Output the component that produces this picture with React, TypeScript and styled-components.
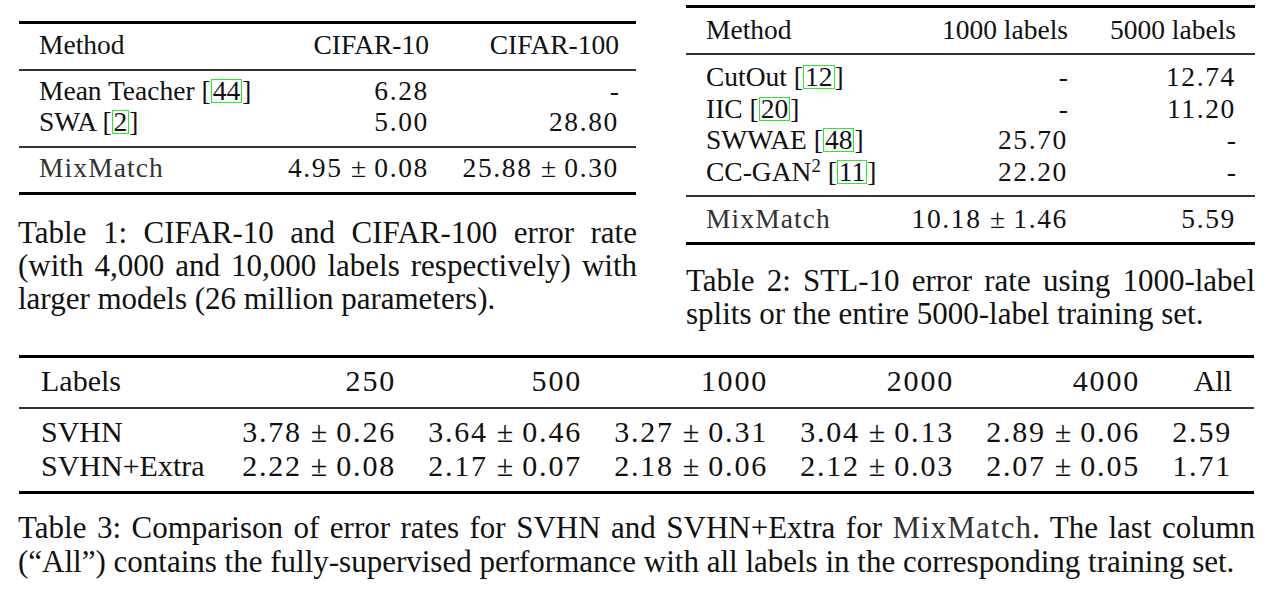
import React, { FC, ReactNode } from 'react';
import styled, { createGlobalStyle } from 'styled-components';

const SERIF = '"Liberation Serif", "Times New Roman", serif';

const GlobalStyle = createGlobalStyle`
    html,
    body {
        margin: 0;
        padding: 0;
        background: #fff;
    }

    body {
        font-family: ${SERIF};
        color: #111;
    }
`;

const Page = styled.div`
    width: 1280px;
    height: 590px;
    overflow: hidden;
    box-sizing: border-box;
    padding: 5px 25px 0 18px;
    font-family: ${SERIF};
`;

const TopRow = styled.div`
    display: flex;
    align-items: flex-start;
    gap: 49px;
`;

const Column = styled.div<{ $width: number; $top?: number }>`
    width: ${(p) => p.$width}px;
    padding-top: ${(p) => p.$top ?? 0}px;
`;

const Table = styled.div<{ $size: number; $inset?: number; $mt?: number }>`
    margin: ${(p) => p.$mt ?? 0}px ${(p) => p.$inset ?? 0}px 0 ${(p) => p.$inset ?? 0}px;
    border-top: 3px solid #000;
    border-bottom: 3px solid #000;
    font-family: ${SERIF};
    font-size: ${(p) => p.$size}px;
`;

const Section = styled.div<{ $cols: string; $lh: number; $pt: number; $pb: number; $pl: number }>`
    display: grid;
    grid-template-columns: ${(p) => p.$cols};
    line-height: ${(p) => p.$lh}px;
    padding: ${(p) => p.$pt}px 0 ${(p) => p.$pb}px ${(p) => p.$pl}px;

    & + & {
        border-top: 2px solid #333;
    }
`;

const Cell = styled.div<{ $right?: boolean }>`
    text-align: ${(p) => (p.$right ? 'right' : 'left')};
    white-space: nowrap;
`;

const Pm = styled.span`
    margin: 0 0.3em;
`;

const Num = styled.span`
    letter-spacing: 0.06em;
`;

const Cite = styled.span`
    display: inline-block;
    line-height: 22px;
    padding: 0 1px;
    border: 1px solid #22f022;
`;

const Sup = styled.sup`
    font-size: 0.68em;
    line-height: 0;
    vertical-align: 0.5em;
`;

const MixMatch = styled.span`
    color: #333;
    letter-spacing: 1.1px;
`;

const Caption = styled.div<{ $lh: number; $mt: number }>`
    margin-top: ${(p) => p.$mt}px;
    font-family: ${SERIF};
    font-size: 31px;
    line-height: ${(p) => p.$lh}px;
`;

const CaptionLine = styled.div<{ $justify?: boolean }>`
    text-align: ${(p) => (p.$justify ? 'justify' : 'left')};
    text-align-last: ${(p) => (p.$justify ? 'justify' : 'left')};
    white-space: nowrap;
`;

const pm = (a: string, b: string) => (
    <>
        <Num>{a}</Num>
        <Pm>±</Pm>
        <Num>{b}</Num>
    </>
);

const Ref: FC<{ children: ReactNode }> = ({ children }) => (
    <>
        [<Cite>{children}</Cite>]
    </>
);

const T1_COLS = '200px 190px 190px';
const T2_COLS = '160px 202px 168px';
const T3_COLS = '169px repeat(5, 186px) 92px';

const svhn = [
    ['3.78', '0.26'],
    ['3.64', '0.46'],
    ['3.27', '0.31'],
    ['3.04', '0.13'],
    ['2.89', '0.06'],
];
const svhnExtra = [
    ['2.22', '0.08'],
    ['2.17', '0.07'],
    ['2.18', '0.06'],
    ['2.12', '0.03'],
    ['2.07', '0.05'],
];

const CifarTable: FC = () => (
    <Table $size={27.5} $inset={1}>
        <Section $cols={T1_COLS} $lh={30.7} $pt={5.5} $pb={8.3} $pl={20}>
            <Cell>Method</Cell>
            <Cell $right>CIFAR-10</Cell>
            <Cell $right>CIFAR-100</Cell>
        </Section>
        <Section $cols={T1_COLS} $lh={30.7} $pt={5.5} $pb={8.3} $pl={20}>
            <Cell>
                Mean Teacher <Ref>44</Ref>
            </Cell>
            <Cell $right>
                <Num>6.28</Num>
            </Cell>
            <Cell $right>-</Cell>
            <Cell>
                SWA <Ref>2</Ref>
            </Cell>
            <Cell $right>
                <Num>5.00</Num>
            </Cell>
            <Cell $right>
                <Num>28.80</Num>
            </Cell>
        </Section>
        <Section $cols={T1_COLS} $lh={30.7} $pt={5.5} $pb={8.3} $pl={20}>
            <Cell>
                <MixMatch>MixMatch</MixMatch>
            </Cell>
            <Cell $right>{pm('4.95', '0.08')}</Cell>
            <Cell $right>{pm('25.88', '0.30')}</Cell>
        </Section>
    </Table>
);

const StlTable: FC = () => (
    <Table $size={27.5}>
        <Section $cols={T2_COLS} $lh={31.5} $pt={6} $pb={7.7} $pl={20}>
            <Cell>Method</Cell>
            <Cell $right>1000 labels</Cell>
            <Cell $right>5000 labels</Cell>
        </Section>
        <Section $cols={T2_COLS} $lh={31.5} $pt={6} $pb={7.7} $pl={20}>
            <Cell>
                CutOut <Ref>12</Ref>
            </Cell>
            <Cell $right>-</Cell>
            <Cell $right>
                <Num>12.74</Num>
            </Cell>
            <Cell>
                IIC <Ref>20</Ref>
            </Cell>
            <Cell $right>-</Cell>
            <Cell $right>
                <Num>11.20</Num>
            </Cell>
            <Cell>
                SWWAE <Ref>48</Ref>
            </Cell>
            <Cell $right>
                <Num>25.70</Num>
            </Cell>
            <Cell $right>-</Cell>
            <Cell>
                CC-GAN<Sup>2</Sup> <Ref>11</Ref>
            </Cell>
            <Cell $right>
                <Num>22.20</Num>
            </Cell>
            <Cell $right>-</Cell>
        </Section>
        <Section $cols={T2_COLS} $lh={31.5} $pt={6} $pb={7.7} $pl={20}>
            <Cell>
                <MixMatch>MixMatch</MixMatch>
            </Cell>
            <Cell $right>{pm('10.18', '1.46')}</Cell>
            <Cell $right>
                <Num>5.59</Num>
            </Cell>
        </Section>
    </Table>
);

const SvhnTable: FC = () => (
    <Table $size={30} $inset={1} $mt={24.9}>
        <Section $cols={T3_COLS} $lh={33.3} $pt={6.5} $pb={9} $pl={22}>
            <Cell>Labels</Cell>
            {['250', '500', '1000', '2000', '4000'].map((h) => (
                <Cell key={h} $right>
                    <Num>{h}</Num>
                </Cell>
            ))}
            <Cell $right>All</Cell>
        </Section>
        <Section $cols={T3_COLS} $lh={33.3} $pt={6.5} $pb={9} $pl={22}>
            <Cell>SVHN</Cell>
            {svhn.map(([a, b]) => (
                <Cell key={a + b} $right>
                    {pm(a, b)}
                </Cell>
            ))}
            <Cell $right>
                <Num>2.59</Num>
            </Cell>
            <Cell>SVHN+Extra</Cell>
            {svhnExtra.map(([a, b]) => (
                <Cell key={a + b} $right>
                    {pm(a, b)}
                </Cell>
            ))}
            <Cell $right>
                <Num>1.71</Num>
            </Cell>
        </Section>
    </Table>
);

const App: FC = () => (
    <Page>
        <GlobalStyle />
        <TopRow>
            <Column $width={619} $top={16}>
                <CifarTable />
                <Caption $lh={33.3} $mt={20.4}>
                    <CaptionLine $justify>Table 1: CIFAR-10 and CIFAR-100 error rate</CaptionLine>
                    <CaptionLine $justify>(with 4,000 and 10,000 labels respectively) with</CaptionLine>
                    <CaptionLine>larger models (26 million parameters).</CaptionLine>
                </Caption>
            </Column>
            <Column $width={569}>
                <StlTable />
                <Caption $lh={32.5} $mt={20}>
                    <CaptionLine $justify>Table 2: STL-10 error rate using 1000-label</CaptionLine>
                    <CaptionLine>splits or the entire 5000-label training set.</CaptionLine>
                </Caption>
            </Column>
        </TopRow>
        <SvhnTable />
        <Caption $lh={34} $mt={17}>
            <CaptionLine $justify>
                Table 3: Comparison of error rates for SVHN and SVHN+Extra for <MixMatch>MixMatch</MixMatch>. The last column
            </CaptionLine>
            <CaptionLine>
                (“All”) contains the fully-supervised performance with all labels in the corresponding training set.
            </CaptionLine>
        </Caption>
    </Page>
);

export default App;
